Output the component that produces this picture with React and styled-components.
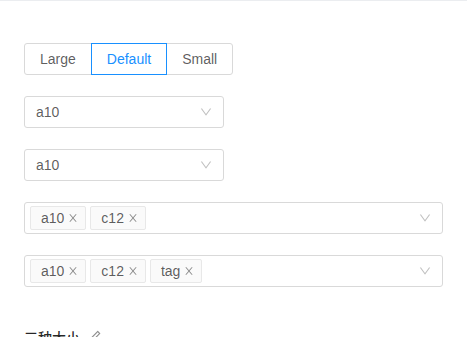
import React from "react";
import styled, { createGlobalStyle } from "styled-components";

const Global = createGlobalStyle`
  html, body { margin: 0; padding: 0; overflow: hidden; background: #fff; }
  body {
    font-family: "Liberation Sans", Arial, "Noto Sans CJK SC", sans-serif;
    font-size: 14px;
    color: rgba(0,0,0,0.65);
  }
`;

const Box = styled.div`
  border-top: 1px solid #ebedf0;
`;

const Demo = styled.div`
  padding: 42px 24px 0;
  display: flex;
  flex-direction: column;
  align-items: flex-start;
  gap: 21px;
`;

const Group = styled.div`
  display: flex;
`;

const RadioBtn = styled.label`
  position: relative;
  display: inline-block;
  height: 32px;
  box-sizing: border-box;
  padding: 0 15px;
  line-height: 30px;
  border: 1px solid ${(p) => (p.$checked ? "#1890ff" : "#d9d9d9")};
  color: ${(p) => (p.$checked ? "#1890ff" : "rgba(0,0,0,0.65)")};
  z-index: ${(p) => (p.$checked ? 1 : 0)};
  background: #fff;
  margin-left: -1px;
  cursor: pointer;
  &:first-child { margin-left: 0; border-radius: 3px 0 0 3px; }
  &:last-child { border-radius: 0 3px 3px 0; }
`;

const Selector = styled.div`
  position: relative;
  box-sizing: border-box;
  width: ${(p) => (p.$full ? "100%" : "200px")};
  height: 32px;
  border: 1px solid #d9d9d9;
  border-radius: 3px;
  background: #fff;
  display: flex;
  align-items: center;
  padding: ${(p) => (p.$full ? "1px 30px 1px 5px" : "0 30px 0 11px")};
`;

const Value = styled.span`
  line-height: 30px;
  color: rgba(0,0,0,0.65);
`;

const Arrow = styled.span`
  position: absolute;
  right: 11px;
  top: 50%;
  margin-top: -6px;
  width: 12px;
  height: 12px;
  display: flex;
  color: rgba(0,0,0,0.25);
`;

const Tags = styled.div`
  display: flex;
  gap: 4px;
`;

const Tag = styled.span`
  box-sizing: border-box;
  height: 24px;
  display: inline-flex;
  align-items: center;
  padding: 0 7px 0 10px;
  line-height: 22px;
  background: #fafafa;
  border: 1px solid #e8e8e8;
  border-radius: 2px;
`;

const TagText = styled.span`
  margin-right: 4px;
`;

const Remove = styled.span`
  display: inline-flex;
  width: 10px;
  height: 10px;
  color: rgba(0,0,0,0.45);
`;

const Title = styled.div`
  margin: 38px 0 0 16px;
  padding: 1px 8px;
  font-family: "Noto Sans CJK SC", sans-serif;
  font-size: 14px;
  line-height: 22px;
  font-weight: 500;
  color: rgba(0,0,0,0.85);
  display: flex;
  align-items: center;
  gap: 8px;
`;

const Down = () => (
  <svg viewBox="64 64 896 896" width="12" height="12" fill="currentColor">
    <path d="M884 256h-75c-5.1 0-9.9 2.5-12.9 6.6L512 654.2 227.9 262.6c-3-4.1-7.8-6.6-12.9-6.6h-75c-6.5 0-10.3 7.4-6.5 12.7l352.6 486.1c12.8 17.6 39 17.6 51.7 0l352.6-486.1c3.9-5.3.1-12.7-6.4-12.7z" />
  </svg>
);

const Close = () => (
  <svg viewBox="64 64 896 896" width="10" height="10" fill="currentColor">
    <path d="M563.8 512l262.5-312.9c4.4-5.2.7-13.1-6.1-13.1h-79.8c-4.7 0-9.2 2.1-12.3 5.7L511.6 449.8 295.1 191.7c-3-3.6-7.5-5.7-12.3-5.7H203c-6.8 0-10.5 7.9-6.1 13.1L459.4 512 196.9 824.9A7.95 7.95 0 00203 838h79.8c4.7 0 9.2-2.1 12.3-5.7l216.5-258.1 216.5 258.1c3 3.6 7.5 5.7 12.3 5.7h79.8c6.8 0 10.5-7.9 6.1-13.1L563.8 512z" />
  </svg>
);

const Edit = () => (
  <svg viewBox="64 64 896 896" width="14" height="14" fill="rgba(0,0,0,0.45)">
    <path d="M257.7 752c2 0 4-.2 6-.5L431.9 722c2-.4 3.9-1.3 5.3-2.8l423.9-423.9a9.96 9.96 0 000-14.1L694.9 114.9c-1.9-1.9-4.4-2.9-7.1-2.9s-5.2 1-7.1 2.9L256.8 538.8c-1.5 1.5-2.4 3.3-2.8 5.3l-29.5 168.2a33.5 33.5 0 009.4 29.8c6.6 6.4 14.9 9.9 23.8 9.9zm67.4-174.4L687.8 215l73.3 73.3-362.7 362.6-88.9 15.7 15.6-89zM880 836H144c-17.7 0-32 14.3-32 32v36c0 4.4 3.6 8 8 8h784c4.4 0 8-3.6 8-8v-36c0-17.7-14.3-32-32-32z" />
  </svg>
);

const Single = ({ value }) => (
  <Selector>
    <Value>{value}</Value>
    <Arrow><Down /></Arrow>
  </Selector>
);

const Multi = ({ values }) => (
  <Selector $full>
    <Tags>
      {values.map((v) => (
        <Tag key={v}>
          <TagText>{v}</TagText>
          <Remove><Close /></Remove>
        </Tag>
      ))}
    </Tags>
    <Arrow><Down /></Arrow>
  </Selector>
);

export default function App() {
  const sizes = ["Large", "Default", "Small"];
  return (
    <Box>
      <Global />
      <Demo>
        <Group>
          {sizes.map((s) => (
            <RadioBtn key={s} $checked={s === "Default"}>{s}</RadioBtn>
          ))}
        </Group>
        <Single value="a10" />
        <Single value="a10" />
        <Multi values={["a10", "c12"]} />
        <Multi values={["a10", "c12", "tag"]} />
      </Demo>
      <Title>
        三种大小
        <Edit />
      </Title>
    </Box>
  );
}
